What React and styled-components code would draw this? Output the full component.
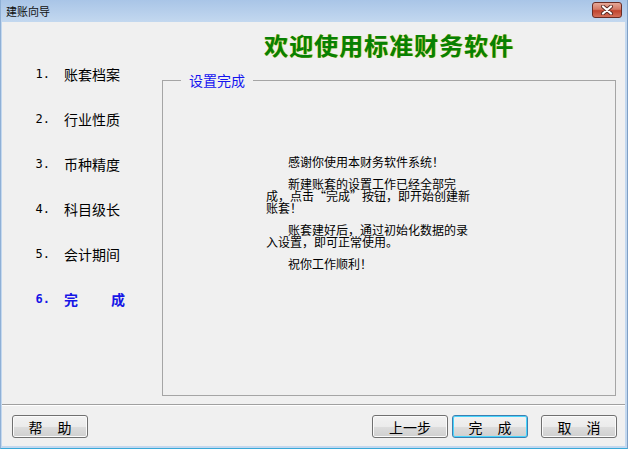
import React from "react";
import styled, { createGlobalStyle } from "styled-components";

const GlobalStyle = createGlobalStyle`
  html, body {
    margin: 0;
    padding: 0;
    background: #f0f0f0;
  }
  body {
    font-family: "Noto Sans CJK SC", "DejaVu Sans", sans-serif;
  }
`;

const Window = styled.div`
  width: 628px;
  height: 449px;
  box-sizing: border-box;
  display: flex;
  flex-direction: column;
  background: linear-gradient(to bottom, #a9c5e7 0px, #c3d8ef 22px, #c3d8ef 100%);
  border-left: 1px solid #8fb0d6;
  border-right: 1px solid #7f9fc4;
  border-bottom: 1px solid #3aa9d8;
  overflow: hidden;
`;

const TitleBar = styled.div`
  height: 22px;
  flex: none;
  display: flex;
  align-items: center;
  justify-content: space-between;
  padding: 0 5px 0 5px;
`;

const Title = styled.span`
  font-size: 11px;
  color: #101010;
  line-height: 22px;
`;

const CloseButton = styled.div`
  width: 30px;
  height: 16px;
  box-sizing: border-box;
  margin-top: -3px;
  border: 1px solid #6a2c24;
  border-radius: 3px;
  background: linear-gradient(to bottom, #e6a898 0%, #d47a66 45%, #c0442e 55%, #d4705a 100%);
  display: flex;
  align-items: center;
  justify-content: center;
`;

const Client = styled.div`
  flex: 1;
  margin: 0 2px 2px 1px;
  background: #f0f0f0;
  display: flex;
  flex-direction: column;
`;

const Main = styled.div`
  flex: 1;
  display: flex;
  min-height: 0;
`;

const Sidebar = styled.ul`
  width: 160px;
  flex: none;
  margin: 0;
  padding: 29px 0 0 0;
  list-style: none;
`;

const Step = styled.li`
  height: 45px;
  display: flex;
  align-items: center;
  color: ${(p) => (p.$active ? "#1515e6" : "#000")};
  font-weight: ${(p) => (p.$active ? 700 : 400)};
`;

const StepNo = styled.span`
  width: 48px;
  text-align: right;
  font-family: "DejaVu Sans Mono", "Liberation Mono", monospace;
  font-size: 12px;
`;

const StepLabel = styled.span`
  margin-left: 14px;
  font-size: 14px;
  display: flex;
  gap: ${(p) => p.$gap || 0}px;
`;

const Content = styled.div`
  flex: 1;
  display: flex;
  flex-direction: column;
  padding-right: 9px;
`;

const Heading = styled.h1`
  margin: 0;
  height: 50px;
  box-sizing: border-box;
  padding-top: 9px;
  text-align: center;
  font-size: 24px;
  line-height: 28px;
  letter-spacing: 1px;
  font-weight: 700;
  color: #068006;
  text-shadow: 1px 0 0 #d6d020;
`;

const GroupBox = styled.fieldset`
  flex: 1;
  margin: 0 0 8px 0;
  padding: 0;
  border: 1px solid #a5a5a5;
  min-width: 0;
`;

const Legend = styled.legend`
  margin-left: 18px;
  padding: 0 8px;
  font-size: 14px;
  line-height: 16px;
  color: #1414f0;
`;

const Message = styled.div`
  padding: 68px 0 0 103px;
`;

const Para = styled.p`
  margin: 0 0 10px 0;
  font-size: 12px;
  line-height: 12px;
  color: #000;
  text-indent: 22px;
  white-space: nowrap;
`;

const Footer = styled.div`
  flex: none;
  border-top: 1px solid #a0a0a0;
  box-shadow: inset 0 1px 0 #ffffff;
  display: flex;
  align-items: center;
  padding: 10px 8px 8px 10px;
`;

const Spacer = styled.div`
  flex: 1;
`;

const Button = styled.button`
  width: 76px;
  height: 23px;
  box-sizing: border-box;
  margin-left: ${(p) => p.$gap || 0}px;
  padding: 0;
  border: 1px solid ${(p) => (p.$default ? "#3c7fb1" : "#707070")};
  border-radius: 3px;
  background: linear-gradient(to bottom, #f2f2f2 0%, #ebebeb 50%, #dddddd 51%, #cfcfcf 100%);
  box-shadow: inset 0 0 0 1px ${(p) => (p.$default ? "#48d5fd" : "#fbfbfb")};
  font-family: "Noto Sans CJK SC", sans-serif;
  font-size: 14px;
  line-height: 20px;
  color: #000;
  word-spacing: ${(p) => p.$spread || 0}px;
`;

const steps = [
  { no: "1.", label: "账套档案" },
  { no: "2.", label: "行业性质" },
  { no: "3.", label: "币种精度" },
  { no: "4.", label: "科目级长" },
  { no: "5.", label: "会计期间" },
];

export default function App() {
  return (
    <>
      <GlobalStyle />
      <Window>
        <TitleBar>
          <Title>建账向导</Title>
          <CloseButton>
            <svg width="14" height="10" viewBox="0 0 14 10">
              <path d="M3 1.5 L11 8.5 M11 1.5 L3 8.5" stroke="#5a2a24" strokeWidth="4" strokeLinecap="round" />
              <path d="M3 1.5 L11 8.5 M11 1.5 L3 8.5" stroke="#ffffff" strokeWidth="2.2" strokeLinecap="round" />
            </svg>
          </CloseButton>
        </TitleBar>
        <Client>
          <Main>
            <Sidebar>
              {steps.map((s) => (
                <Step key={s.no}>
                  <StepNo>{s.no}</StepNo>
                  <StepLabel>{s.label}</StepLabel>
                </Step>
              ))}
              <Step $active>
                <StepNo>6.</StepNo>
                <StepLabel $gap={33}>
                  <span>完</span>
                  <span>成</span>
                </StepLabel>
              </Step>
            </Sidebar>
            <Content>
              <Heading>欢迎使用标准财务软件</Heading>
              <GroupBox>
                <Legend>设置完成</Legend>
                <Message>
                  <Para>感谢你使用本财务软件系统！</Para>
                  <Para>
                    新建账套的设置工作已经全部完
                    <br />
                    成，点击“完成”按钮，即开始创建新
                    <br />
                    账套！
                  </Para>
                  <Para>
                    账套建好后，通过初始化数据的录
                    <br />
                    入设置，即可正常使用。
                  </Para>
                  <Para>祝你工作顺利！</Para>
                </Message>
              </GroupBox>
            </Content>
          </Main>
          <Footer>
            <Button $spread={12}>帮 助</Button>
            <Spacer />
            <Button>上一步</Button>
            <Button $default $gap={4} $spread={12}>完 成</Button>
            <Button $gap={13} $spread={12}>取 消</Button>
          </Footer>
        </Client>
      </Window>
    </>
  );
}
